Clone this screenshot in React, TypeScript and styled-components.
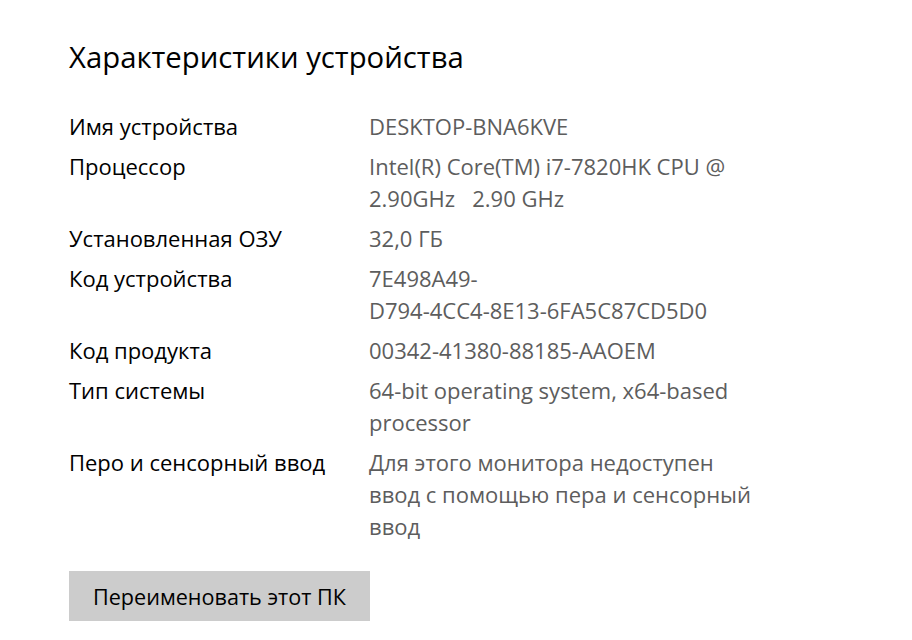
import React from "react";
import styled, { createGlobalStyle } from "styled-components";

const specs: { label: string; lines: string[] }[] = [
  { label: "Имя устройства", lines: ["DESKTOP-BNA6KVE"] },
  {
    label: "Процессор",
    lines: ["Intel(R) Core(TM) i7-7820HK CPU @", "2.90GHz   2.90 GHz"],
  },
  { label: "Установленная ОЗУ", lines: ["32,0 ГБ"] },
  { label: "Код устройства", lines: ["7E498A49-", "D794-4CC4-8E13-6FA5C87CD5D0"] },
  { label: "Код продукта", lines: ["00342-41380-88185-AAOEM"] },
  {
    label: "Тип системы",
    lines: ["64-bit operating system, x64-based", "processor"],
  },
  {
    label: "Перо и сенсорный ввод",
    lines: [
      "Для этого монитора недоступен",
      "ввод с помощью пера и сенсорный",
      "ввод",
    ],
  },
];

const App: React.FC = () => {
  return (
    <>
      <GlobalStyle />
      <Page>
        <Title>Характеристики устройства</Title>
        <SpecList>
          {specs.map((spec) => (
            <SpecRow key={spec.label}>
              <Label>{spec.label}</Label>
              <Value>
                {spec.lines.map((line) => (
                  <Line key={line}>{line}</Line>
                ))}
              </Value>
            </SpecRow>
          ))}
        </SpecList>
        <RenameButton>Переименовать этот ПК</RenameButton>
      </Page>
    </>
  );
};

export default App;

const GlobalStyle = createGlobalStyle`
  html, body {
    margin: 0;
    padding: 0;
    background: #ffffff;
  }
  body {
    font-family: "Open Sans", "Noto Sans", sans-serif;
  }
`;

const Page = styled.div`
  width: 912px;
  height: 640px;
  box-sizing: border-box;
  padding: 37px 0 0 69px;
  display: flex;
  flex-direction: column;
  align-items: flex-start;
  overflow: hidden;
`;

const Title = styled.h1`
  margin: 0;
  font-size: 29.3px;
  font-weight: 400;
  line-height: 40px;
  color: #000000;
`;

const SpecList = styled.div`
  margin-top: 33px;
  display: flex;
  flex-direction: column;
  gap: 8px;
`;

const SpecRow = styled.div`
  display: grid;
  grid-template-columns: 300px auto;
`;

const Label = styled.div`
  font-size: 22px;
  line-height: 32px;
  color: #000000;
  white-space: nowrap;
`;

const Value = styled.div`
  display: flex;
  flex-direction: column;
  font-size: 22px;
  line-height: 32px;
  color: #5d5d5d;
`;

const Line = styled.span`
  white-space: pre;
`;

const RenameButton = styled.button`
  margin-top: 29px;
  height: 50px;
  padding: 0 24px;
  border: none;
  border-radius: 0;
  background: #cccccc;
  color: #000000;
  font-family: "Open Sans", "Noto Sans", sans-serif;
  font-size: 21.6px;
  cursor: pointer;
`;
